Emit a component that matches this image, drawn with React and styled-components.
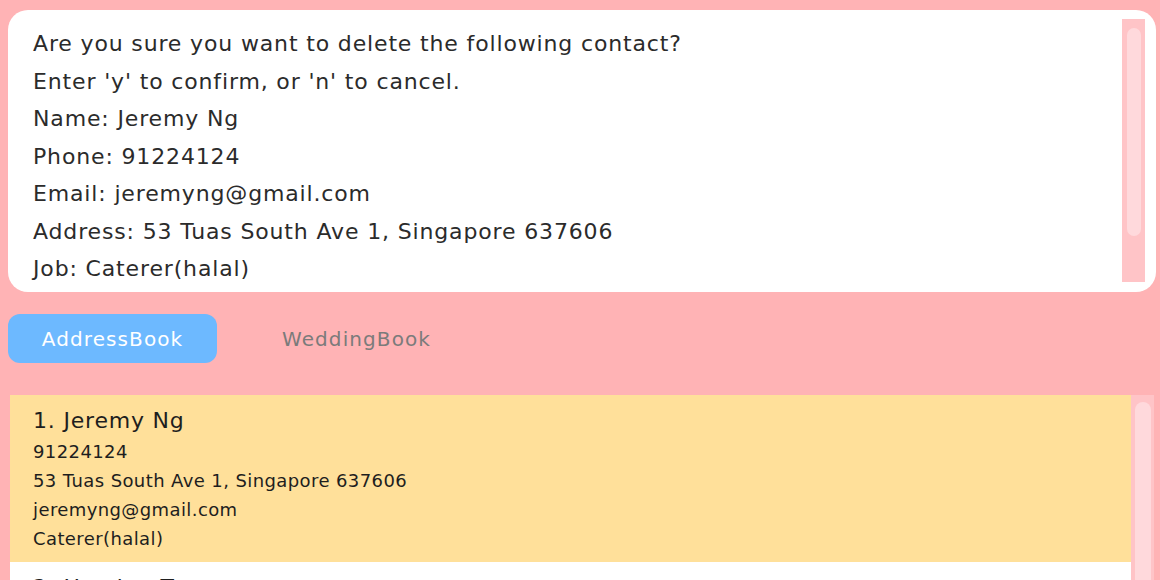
import React from "react";
import styled, { createGlobalStyle } from "styled-components";

const Global = createGlobalStyle`
  html, body { margin: 0; padding: 0; }
  body {
    background: #ffb3b5;
    font-family: "DejaVu Sans", "Open Sans", sans-serif;
    overflow: hidden;
    height: 580px;
  }
`;

const Page = styled.div`
  display: flex;
  flex-direction: column;
  padding: 10px 4px 0 8px;
  height: 570px;
  overflow: hidden;
`;

const ResultBox = styled.div`
  display: flex;
  background: #ffffff;
  border-radius: 20px;
  height: 282px;
  box-sizing: border-box;
`;

const ResultText = styled.div`
  flex: 1;
  padding: 15px 0 0 25px;
  color: #2b2b2b;
  font-size: 22px;
  line-height: 37.5px;
  letter-spacing: 0.85px;
`;

const Track = styled.div`
  width: 23px;
  flex: none;
  background: #ffc4c7;
  margin: ${(p) => p.$margin || "0"};
  padding: ${(p) => p.$pad || "0"};
  box-sizing: border-box;
`;

const Thumb = styled.div`
  background: #ffd9dc;
  border-radius: 8px;
  height: ${(p) => p.$h}px;
`;

const Tabs = styled.div`
  display: flex;
  margin-top: 22px;
  gap: 35px;
`;

const Tab = styled.div`
  width: 209px;
  height: 49px;
  border-radius: 12px;
  display: flex;
  align-items: center;
  justify-content: center;
  font-size: 20px;
  letter-spacing: 1.1px;
  background: ${(p) => (p.$active ? "#6db9ff" : "transparent")};
  color: ${(p) => (p.$active ? "#ffffff" : "#7b7b7b")};
`;

const ListArea = styled.div`
  display: flex;
  margin: 32px 2px 0 2px;
  flex: 1;
  overflow: hidden;
`;

const Cards = styled.div`
  flex: 1;
  display: flex;
  flex-direction: column;
`;

const Card = styled.div`
  background: ${(p) => (p.$selected ? "#ffe09a" : "#ffffff")};
  padding: 10px 0 9px 23px;
  color: #1e1e1e;
`;

const Name = styled.div`
  font-size: 22px;
  line-height: 32px;
  letter-spacing: 0.8px;
`;

const Field = styled.div`
  font-size: 18px;
  line-height: 29px;
  letter-spacing: 0.4px;
`;

const contacts = [
  {
    name: "Jeremy Ng",
    phone: "91224124",
    address: "53 Tuas South Ave 1, Singapore 637606",
    email: "jeremyng@gmail.com",
    job: "Caterer(halal)",
  },
  {
    name: "Hayden Tan",
    phone: "98765432",
    address: "Blk 30 Geylang Street 29, #06-40",
    email: "haydentan@example.com",
    job: "Photographer",
  },
];

export default function App() {
  return (
    <>
      <Global />
      <Page>
        <ResultBox>
          <ResultText>
            <div>Are you sure you want to delete the following contact?</div>
            <div>Enter 'y' to confirm, or 'n' to cancel.</div>
            <div>Name: Jeremy Ng</div>
            <div>Phone: 91224124</div>
            <div>Email: jeremyng@gmail.com</div>
            <div>Address: 53 Tuas South Ave 1, Singapore 637606</div>
            <div>Job: Caterer(halal)</div>
          </ResultText>
          <Track $margin="9px 11px 10px 0" $pad="9px 4px 0 5px">
            <Thumb $h={208} />
          </Track>
        </ResultBox>
        <Tabs>
          <Tab $active>AddressBook</Tab>
          <Tab>WeddingBook</Tab>
        </Tabs>
        <ListArea>
          <Cards>
            {contacts.map((c, i) => (
              <Card key={c.name} $selected={i === 0}>
                <Name>
                  {i + 1}. {c.name}
                </Name>
                <Field>{c.phone}</Field>
                <Field>{c.address}</Field>
                <Field>{c.email}</Field>
                <Field>{c.job}</Field>
              </Card>
            ))}
          </Cards>
          <Track $pad="7px 3px 0 4px">
            <Thumb $h={400} />
          </Track>
        </ListArea>
      </Page>
    </>
  );
}
